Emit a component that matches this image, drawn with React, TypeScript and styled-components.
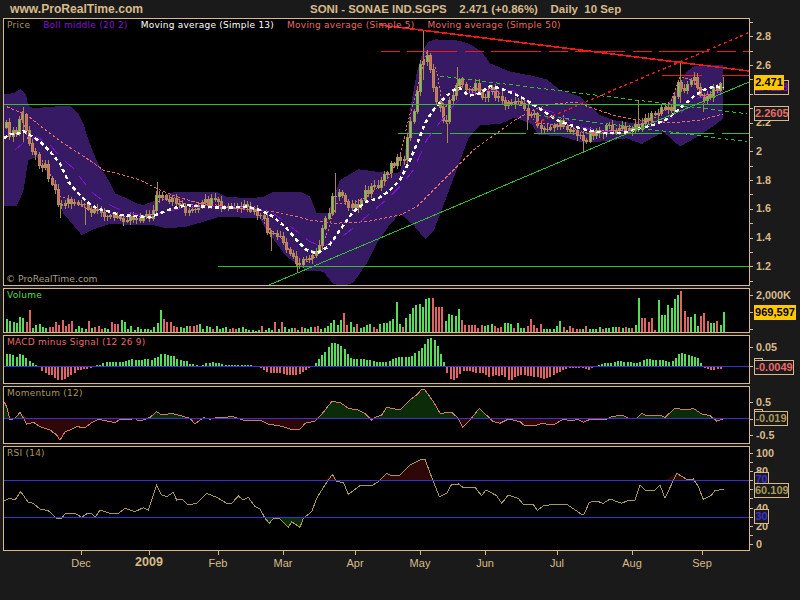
import React from "react";
import styled, { createGlobalStyle } from "styled-components";

type Point = number[];

const TAN = "#d8ba8a";
const GREEN_LINE = "#2fbf2f";
const BLUE_LINE = "#3a30d8";
const BAR_GREEN = "#55dd55";
const BAR_RED = "#e06464";
const OLIVE = "#a89858";
const SALMON = "#e86a6a";

const GlobalStyle = createGlobalStyle`
    html, body {
        margin: 0;
        padding: 0;
        background: #1a1a1a;
    }
`;

const Page = styled.div`
    width: 800px;
    height: 600px;
    overflow: hidden;
    background: #1a1a1a;
    color: ${TAN};
    font-family: "Liberation Sans", Arial, sans-serif;
    padding-left: 3px;
    box-sizing: border-box;
    display: flex;
    flex-direction: column;
`;

const Header = styled.div`
    height: 18px;
    display: flex;
    align-items: center;
    font-weight: bold;
    white-space: pre;
`;

const Site = styled.span`
    margin-left: 7px;
    width: 300px;
    font-size: 12.1px;
`;

const Title = styled.span`
    font-size: 11.45px;
`;

const ChartStack = styled.div`
    display: flex;
    flex-direction: column;
    gap: 2px;
`;

const PaneRow = styled.div<{ $h: number }>`
    display: flex;
    height: ${p => p.$h}px;
`;

const Pane = styled.div`
    position: relative;
    width: 747px;
    height: 100%;
    box-sizing: border-box;
    border: 1px solid ${TAN};
    background: #000;
`;

const ChartSvg = styled.svg`
    display: block;
`;

const Legend = styled.div`
    position: absolute;
    top: 1px;
    left: 3px;
    display: flex;
    gap: 13px;
    font-family: "DejaVu Sans", sans-serif;
    font-size: 9px;
    line-height: 11px;
    letter-spacing: 0.24px;
    white-space: nowrap;
`;

const LegendItem = styled.span<{ $color: string }>`
    color: ${p => p.$color};
`;

const Watermark = styled.div`
    position: absolute;
    left: 2px;
    bottom: 0;
    font-family: "DejaVu Sans", sans-serif;
    font-size: 9.2px;
    line-height: 12px;
    color: #a89c80;
`;

// the ticks are a repeating background, the labels sit in a grid of the same pitch
const Axis = styled.div<{ $start: number; $step: number }>`
    position: relative;
    width: 50px;
    background-image: repeating-linear-gradient(to bottom, ${TAN} 0, ${TAN} 1px, transparent 1px, transparent ${p => p.$step}px);
    background-size: 3px 100%;
    background-position: 0 ${p => p.$start}px;
    background-repeat: no-repeat;
`;

const AxisLabels = styled.div<{ $top: number; $step: number }>`
    display: grid;
    grid-auto-rows: ${p => p.$step}px;
    padding: ${p => p.$top}px 0 0 6px;
    font-size: 10.8px;
    line-height: 14px;
    font-weight: bold;
    white-space: nowrap;
`;

const ValueTag = styled.div<{ $y: number; $color: string; $w: number; $fill?: boolean }>`
    position: absolute;
    left: 4px;
    top: ${p => p.$y}px;
    width: ${p => p.$w}px;
    height: 15px;
    box-sizing: border-box;
    border: 1px solid ${p => (p.$fill ? "#ffc800" : TAN)};
    background: ${p => (p.$fill ? "#ffc800" : "#1a1a1a")};
    color: ${p => p.$color};
    font-size: 11px;
    line-height: 13px;
    font-weight: bold;
    text-align: center;
    white-space: nowrap;
`;

const TimeAxis = styled.div`
    display: flex;
    height: 48px;
    padding-left: 78px;
`;

const MonthMark = styled.div<{ $w: number }>`
    width: ${p => p.$w}px;
    display: flex;
    flex-direction: column;
`;

const MonthTick = styled.div`
    width: 1px;
    height: 4px;
    background: ${TAN};
`;

const MonthLabel = styled.div<{ $year?: boolean }>`
    width: 40px;
    margin: ${p => (p.$year ? 0 : 1)}px 0 0 -20px;
    text-align: center;
    font-size: ${p => (p.$year ? 12.5 : 11)}px;
    line-height: 14px;
    font-weight: ${p => (p.$year ? "bold" : "normal")};
`;

// traced in 3x zoom coordinates, the right half of the chart starts again at 0
const joinHalves = (left: Point[], right: Point[]): Point[] =>
    [...left, ...right.map(([x, y]) => [x + 1200, y])];

const BAND_UPPER = joinHalves(
    [[12, 282], [40, 280], [62, 267], [78, 283], [84, 315], [100, 325], [150, 320], [210, 318], [235, 340], [250, 370], [265, 420], [285, 470], [300, 500], [325, 540], [345, 580], [380, 595], [410, 610], [430, 615], [470, 600], [510, 578], [560, 575], [650, 575], [680, 590], [750, 595], [790, 590], [820, 575], [900, 575], [930, 590], [950, 640], [985, 640], [1020, 540], [1075, 508], [1130, 515], [1190, 520]],
    [[0, 515], [15, 460], [30, 330], [50, 220], [70, 150], [85, 125], [105, 118], [180, 122], [215, 135], [245, 155], [270, 190], [330, 215], [400, 228], [440, 238], [480, 270], [540, 290], [600, 345], [640, 360], [700, 370], [760, 345], [800, 320], [830, 265], [860, 215], [885, 197], [970, 195]]
);

const BAND_LOWER = joinHalves(
    [[12, 617], [50, 617], [70, 575], [85, 480], [110, 470], [130, 500], [160, 540], [175, 590], [190, 640], [245, 705], [275, 690], [330, 672], [400, 675], [460, 675], [500, 685], [560, 680], [660, 650], [780, 655], [795, 685], [860, 770], [920, 812], [970, 815], [1000, 852], [1030, 858], [1060, 848], [1100, 790], [1130, 730], [1165, 680]],
    [[0, 640], [40, 675], [75, 717], [100, 695], [125, 630], [170, 510], [205, 415], [240, 375], [300, 372], [345, 352], [395, 372], [415, 405], [480, 408], [550, 428], [600, 425], [680, 415], [725, 432], [790, 395], [840, 440], [900, 405], [945, 375], [970, 355]]
);

const MA13 = joinHalves(
    [[12, 415], [30, 402], [50, 403], [70, 393], [90, 405], [120, 425], [150, 455], [180, 490], [205, 545], [230, 575], [260, 605], [290, 625], [330, 635], [360, 645], [400, 648], [450, 652], [480, 640], [520, 625], [560, 615], [610, 620], [650, 622], [700, 622], [740, 620], [780, 630], [820, 650], [860, 685], [890, 720], [920, 750], [950, 760], [985, 740], [1020, 690], [1060, 635], [1100, 605], [1135, 595], [1165, 575]],
    [[0, 540], [30, 480], [60, 410], [75, 370], [100, 330], [130, 297], [160, 270], [180, 265], [205, 287], [240, 280], [270, 258], [300, 265], [340, 280], [370, 295], [410, 320], [440, 340], [470, 360], [510, 375], [560, 390], [620, 400], [680, 398], [720, 385], [760, 375], [800, 358], [840, 325], [880, 290], [910, 270], [945, 258], [970, 265]]
);

const MA5 = joinHalves(
    [[65, 340], [85, 420], [120, 470], [150, 520], [180, 590], [215, 600], [260, 625], [310, 630], [360, 650], [450, 650], [480, 600], [520, 590], [560, 615], [620, 610], [700, 625], [770, 630], [800, 680], [850, 720], [880, 770], [920, 785], [950, 770], [985, 690], [1010, 610], [1060, 610], [1100, 590], [1160, 540]],
    [[0, 470], [20, 380], [50, 270], [80, 160], [110, 210], [130, 330], [160, 290], [190, 250], [240, 270], [280, 265], [320, 300], [370, 320], [410, 370], [450, 372], [500, 375], [540, 395], [570, 400], [620, 390], [680, 390], [720, 375], [780, 345], [815, 300], [840, 230], [880, 240], [910, 290], [950, 270], [970, 260]]
);

const MA50 = joinHalves(
    [[20, 320], [80, 345], [130, 385], [190, 430], [260, 475], [310, 510], [370, 525], [420, 540], [480, 570], [530, 590], [580, 605], [640, 620], [700, 625], [780, 630], [850, 640], [930, 660], [1000, 670], [1100, 665]],
    [[0, 645], [50, 620], [100, 570], [160, 510], [220, 450], [290, 400], [345, 360], [410, 325], [470, 310], [530, 308], [580, 325], [640, 345], [700, 358], [770, 365], [830, 368], [900, 360], [970, 342]]
);

const MA20 = joinHalves(
    [[45, 450], [80, 420], [110, 410], [150, 435], [185, 475], [220, 505], [250, 545], [280, 580], [320, 610], [350, 625], [400, 640], [450, 650], [500, 635], [560, 622], [650, 620], [760, 622], [820, 640], [860, 670], [930, 725], [970, 740], [1040, 700], [1110, 640], [1170, 590]],
    [[0, 560], [40, 510], [80, 420], [140, 340], [190, 285], [260, 270], [340, 272], [400, 320], [470, 340], [540, 380], [620, 395], [700, 395], [780, 370], [840, 340], [890, 295], [970, 275]]
);

const PRICE_PATH = joinHalves(
    [[20, 380], [30, 400], [45, 405], [60, 350], [70, 340], [80, 410], [90, 455], [105, 460], [120, 490], [135, 500], [150, 530], [165, 570], [180, 620], [200, 600], [220, 605], [240, 610], [260, 630], [285, 640], [310, 635], [330, 650], [350, 655], [380, 650], [410, 650], [450, 650], [468, 590], [485, 590], [500, 610], [525, 600], [550, 625], [580, 635], [610, 610], [640, 605], [670, 625], [700, 625], [740, 625], [770, 640], [790, 665], [800, 690], [820, 710], [845, 720], [865, 760], [885, 775], [905, 790], [925, 770], [950, 745], [968, 690], [990, 630], [1000, 570], [1020, 590], [1045, 610], [1065, 620], [1090, 580], [1130, 565], [1165, 500], [1185, 480]],
    [[10, 470], [30, 380], [50, 280], [60, 200], [75, 155], [90, 210], [105, 280], [120, 340], [135, 370], [150, 300], [170, 240], [195, 260], [225, 260], [250, 285], [275, 260], [300, 310], [320, 310], [345, 290], [375, 330], [400, 345], [420, 395], [450, 375], [490, 372], [525, 395], [550, 425], [570, 395], [600, 390], [650, 385], [690, 392], [715, 375], [740, 355], [785, 330], [815, 320], [830, 250], [855, 260], [885, 235], [910, 300], [940, 270], [970, 245]]
);

// x in 3x zoom coordinates, then wick top and bottom
const WICK_SPIKES = [
    [70, 320, 430], [180, 610, 655], [255, 620, 675], [470, 547, 620], [812, 690, 752], [890, 785, 820], [1005, 520, 640],
    [1270, 90, 240], [1340, 370, 430], [1370, 200, 260], [1580, 330, 390], [1750, 425, 455], [1915, 300, 380], [2040, 185, 310], [2110, 310, 335], [2170, 230, 270],
];

const VOLUME = [
    13, 11, 10, 9, 15, 14, -10, -22, 4, 7, 8, 5, 4, -5, -5, -10, -7, -12, -6, -8, -11, 3, 6, 4, 3, -11, 4, -5, -6, -3, 4, 3, -10, -8, -8, 12, 10, 3, 6, 2, 5, 3, 3, 3, 2, 5, 9, 22, -13, -10, -10, -6, -5, 5, 4, 6, -6, -6, -7, 8, 3, 6, 5, -3, 6, 3, 4, 5, -3, -4, -3, 4, 5, 3, 2, 2, 1, 2, -6, 2, 4, 2, -10, 3, -10, 5, 3, 4, -4, 2, -5, 4, 3, 5, -5, -6, 3, 4, 6, 9, 12, 7, 12, -19, -7, 10, 5, -8, 4, 5, 7, 8, -5, -3, 8, 9, 9, 11, 13, 30, 8,
    -5, 14, 18, 24, 27, 28, 25, 33, 34, -34, -25, -25, -25, 11, 18, 17, 16, 23, -12, -7, -7, -7, -7, -4, -7, 6, 7, 8, -6, -4, -5, 9, 9, 8, -4, 9, 4, 4, -6, -13, -7, -4, -8, 3, 3, 3, 3, 6, 11, -5, 2, -6, -4, -3, -3, 3, -6, 3, 3, 3, 5, -3, 4, 4, 5, 5, -5, 4, -5, 4, -4, 7, 34, -14, -14, -10, -14, -2, 32, 17, 17, 27, 24, 33, 37, -41, -21, -15, 15, 18, 6, -16, -19, -11, 9, 9, -11, 7, 20,
];

const MACD = [
    12, 12, 11, 9, 12, 11, 8, 5, 3, 1, -1, -5, -7, -9, -9, -12, -14, -14, -13, -11, -9, -7, -4, -4, -3, -3, -2, -1, 1, 1, 3, 4, 4, 4, 4, 4, 4, 5, 6, 7, 6, 6, 6, 7, 7, 6, 8, 9, 12, 12, 11, 10, 10, 7, 6, 5, 5, 2, 2, 1, -1, 1, 3, 3, 4, 3, 3, 2, 1, 1, 1, 1, 1, 1, 1, 1, 1, -1, -1, -2, -4, -6, -7, -7, -7, -7, -8, -9, -9, -9, -9, -8, -6, -4, -2, -1, 3, 7, 11, 14, 19, 23, 23, 22, 20, 17, 12, 8, 7, 7, 7, 7, 6, 6, 5, 4, 4, 4, 4, 5, 7, 8, 9, 9, 9,
    9, 10, 13, 15, 18, 22, 27, 28, 26, 20, 12, 4, -7, -13, -14, -12, -8, -5, -5, -5, -6, -7, -7, -7, -9, -11, -10, -9, -10, -9, -11, -14, -14, -11, -10, -9, -9, -10, -10, -11, -11, -12, -13, -12, -11, -9, -7, -6, -4, -3, -2, -2, -2, -2, -2, -3, -4, -2, -1, 1, 2, 3, 3, 3, 4, 5, 5, 4, 4, 4, 3, 3, 4, 6, 7, 7, 6, 6, 6, 6, 5, 4, 5, 8, 12, 13, 12, 11, 10, 9, 8, 3, -2, -3, -4, -4, -3, -3, -1,
];

const MOMENTUM = joinHalves(
    [[12, 350], [20, 365], [30, 405], [45, 400], [60, 382], [80, 417], [100, 412], [120, 425], [150, 435], [170, 450], [180, 466], [195, 440], [215, 433], [230, 425], [255, 428], [275, 413], [295, 403], [320, 408], [345, 413], [360, 403], [385, 405], [405, 400], [412, 405], [430, 405], [450, 397], [470, 380], [485, 390], [515, 385], [545, 393], [570, 400], [585, 417], [610, 398], [630, 403], [650, 398], [700, 395], [730, 405], [780, 405], [805, 417], [850, 425], [870, 432], [900, 433], [915, 415], [945, 408], [965, 388], [995, 350], [1020, 352], [1045, 370], [1075, 375], [1095, 385], [1115, 405], [1130, 395], [1145, 390], [1160, 367]],
    [[0, 375], [30, 345], [50, 330], [65, 313], [75, 315], [100, 350], [120, 385], [155, 382], [175, 400], [188, 427], [210, 405], [238, 370], [250, 382], [270, 400], [280, 410], [300, 415], [325, 402], [360, 410], [375, 423], [410, 420], [425, 415], [460, 420], [490, 403], [520, 408], [530, 402], [550, 412], [570, 403], [615, 405], [635, 395], [665, 390], [685, 400], [710, 400], [725, 385], [740, 392], [780, 390], [795, 397], [825, 370], [860, 375], [880, 370], [905, 387], [930, 392], [950, 408], [970, 402]]
);

const RSI = joinHalves(
    [[12, 647], [30, 640], [45, 645], [62, 620], [85, 652], [100, 655], [120, 672], [145, 677], [170, 700], [185, 700], [195, 687], [225, 685], [245, 697], [262, 685], [275, 685], [285, 697], [300, 675], [330, 685], [355, 685], [375, 670], [405, 680], [430, 668], [445, 675], [470, 600], [485, 630], [500, 635], [520, 622], [530, 645], [545, 642], [565, 660], [590, 655], [620, 625], [650, 637], [680, 655], [695, 655], [715, 633], [730, 645], [745, 637], [765, 665], [780, 672], [795, 700], [808, 715], [820, 700], [840, 702], [865, 727], [875, 710], [900, 727], [910, 700], [935, 680], [950, 640], [975, 600], [997, 568], [1010, 590], [1030, 592], [1045, 628], [1080, 602], [1115, 602], [1135, 590], [1160, 565], [1175, 572]],
    [[0, 570], [30, 540], [65, 523], [75, 523], [100, 590], [118, 635], [140, 625], [155, 598], [175, 597], [190, 608], [225, 607], [245, 632], [258, 615], [290, 632], [305, 655], [325, 630], [355, 640], [370, 658], [400, 658], [412, 677], [430, 662], [470, 657], [500, 658], [530, 678], [545, 688], [552, 688], [568, 652], [590, 648], [610, 655], [630, 642], [665, 655], [680, 648], [705, 645], [720, 600], [735, 615], [765, 615], [780, 600], [795, 640], [830, 565], [860, 583], [880, 582], [895, 605], [910, 643], [935, 630], [945, 617], [972, 612]]
);

const MONTHS = [
    { name: "Dec", width: 68 },
    { name: "2009", width: 69, year: true },
    { name: "Feb", width: 65 },
    { name: "Mar", width: 72 },
    { name: "Apr", width: 65 },
    { name: "May", width: 65 },
    { name: "Jun", width: 72 },
    { name: "Jul", width: 75 },
    { name: "Aug", width: 70 },
    { name: "Sep", width: 40 },
];

// points are in the 3x zoom of the picture, yOffset is where that zoom began
const toSvg = (list: Point[], yOffset = 0) =>
    list.map(([x, y]) => `${x / 3},${y / 3 + yOffset}`).join(" ");

const interpolate = (list: Point[], x: number) => {
    if (x <= list[0][0]) return list[0][1];
    for (let i = 1; i < list.length; i++) {
        if (x <= list[i][0]) {
            const [x0, y0] = list[i - 1];
            const [x1, y1] = list[i];
            return y0 + ((y1 - y0) * (x - x0)) / (x1 - x0);
        }
    }
    return list[list.length - 1][1];
};

const noise = (i: number) => {
    const v = Math.sin(i * 12.9898) * 43758.5453;
    return v - Math.floor(v);
};

const Candles: React.FC = () => {
    let previous = interpolate(PRICE_PATH, 18) / 3;
    return (
        <>
            {Array.from({ length: 220 }, (_, i) => {
                const x = 6 + i * 3.26;
                const swing = noise(i) * 26 - 13;
                const close = (interpolate(PRICE_PATH, x * 3) + swing) / 3;
                const open = previous;
                previous = close;
                const top = Math.round(Math.min(open, close));
                const bottom = Math.round(Math.max(open, close)) + 1;
                const height = bottom - top;
                const left = Math.round(x) - 1;
                const centre = close < open ? BAR_GREEN : BAR_RED;
                const wickTop = top - 1 - Math.round(noise(i + 400) * 4);
                const wickBottom = bottom + 1 + Math.round(noise(i + 800) * 4);
                return (
                    <g key={i}>
                        <rect x={left + 1} y={wickTop} width={1} height={wickBottom - wickTop} fill="#a88850" />
                        <rect x={left} y={top} width={3} height={height} fill="#b08f5c" />
                        {height > 4 && <rect x={left + 1} y={top + 1} width={1} height={height - 2} fill={centre} />}
                    </g>
                );
            })}
            {WICK_SPIKES.map(([x, top, bottom]) => (
                <rect key={x} x={Math.round(x / 3)} y={top / 3} width={1} height={(bottom - top) / 3} fill="#a88850" />
            ))}
        </>
    );
};

// sign is the colour; columns stand on the baseline, histograms go either way
const Bars: React.FC<{ values: number[]; baseline: number; columns?: boolean }> = ({ values, baseline, columns }) => (
    <>
        {values.map((value, i) => {
            const x = Math.round(6 + (i * 717) / (values.length - 1));
            const height = Math.abs(value);
            return (
                <rect
                    key={i}
                    x={x}
                    y={value > 0 || columns ? baseline - height : baseline}
                    width={2}
                    height={height}
                    fill={value > 0 ? BAR_GREEN : BAR_RED}
                />
            );
        })}
    </>
);

const clampFill = (list: Point[], limit: number, above: boolean, yOffset: number) => {
    const clamped = list.map(([x, y]) => [x, above ? Math.min(y, limit) : Math.max(y, limit)]);
    const first = clamped[0][0];
    const last = clamped[clamped.length - 1][0];
    return toSvg([[first, limit], ...clamped, [last, limit]], yOffset);
};

const PricePanel: React.FC = () => (
    <PaneRow $h={268}>
        <Pane>
            <ChartSvg width={745} height={266} viewBox="4 19 745 266" shapeRendering="crispEdges">
                <polygon points={toSvg([...BAND_UPPER, ...[...BAND_LOWER].reverse()])} fill="#361a63" />
                <line x1={398} y1={133.5} x2={749} y2={133.5} stroke={GREEN_LINE} strokeDasharray="44 8 76 8" />
                <line x1={381} y1={51.5} x2={749} y2={51.5} stroke="#f01818" strokeDasharray="19 7 50 8" />
                <line x1={662} y1={75.5} x2={749} y2={75.5} stroke="#f01818" strokeDasharray="40 20" />
                <Candles />
                <polyline points={toSvg(MA50)} fill="none" stroke={SALMON} strokeDasharray="3 2" />
                <polyline points={toSvg(MA20)} fill="none" stroke="#8410d8" strokeDasharray="12 9" />
                <polyline points={toSvg(MA5)} fill="none" stroke={SALMON} strokeDasharray="2 2" />
                <polyline points={toSvg(MA13)} fill="none" stroke="#fff" strokeWidth={2.5} strokeDasharray="4 3" />
                <line x1={4} y1={104.5} x2={749} y2={104.5} stroke={GREEN_LINE} />
                <line x1={218} y1={266.5} x2={749} y2={266.5} stroke={GREEN_LINE} />
                <line x1={269} y1={285} x2={749} y2={82} stroke={GREEN_LINE} />
                <line x1={380} y1={25} x2={749} y2={71} stroke="#f01818" strokeWidth={1.6} />
                <line x1={536} y1={123} x2={748} y2={33} stroke="#f01818" strokeWidth={1.4} strokeDasharray="3 3" />
                <line x1={440} y1={76} x2={747} y2={113.7} stroke={GREEN_LINE} strokeDasharray="4 3" />
                <line x1={537} y1={115} x2={747} y2={141.7} stroke={GREEN_LINE} strokeDasharray="4 3" />
            </ChartSvg>
            <Legend>
                <LegendItem $color={OLIVE}>Price</LegendItem>
                <LegendItem $color="#8410d8">Boll middle (20 2)</LegendItem>
                <LegendItem $color="#fff">Moving average (Simple 13)</LegendItem>
                <LegendItem $color={SALMON}>Moving average (Simple 5)</LegendItem>
                <LegendItem $color={SALMON}>Moving average (Simple 50)</LegendItem>
            </Legend>
            <Watermark>© ProRealTime.com</Watermark>
        </Pane>
        <Axis $start={3.6} $step={14.37}>
            <AxisLabels $top={11} $step={28.74}>
                <span>2.8</span>
                <span>2.6</span>
                <span />
                <span>2.2</span>
                <span>2</span>
                <span>1.8</span>
                <span>1.6</span>
                <span>1.4</span>
                <span>1.2</span>
            </AxisLabels>
            <ValueTag $y={62} $w={35} $color="#8410d8">2.4118</ValueTag>
            <ValueTag $y={57} $w={30} $color="#000" $fill>2.471</ValueTag>
            <ValueTag $y={88} $w={35} $color={SALMON}>2.2605</ValueTag>
        </Axis>
    </PaneRow>
);

const VolumePanel: React.FC = () => (
    <PaneRow $h={45}>
        <Pane>
            <ChartSvg width={745} height={43} viewBox="4 289 745 43" shapeRendering="crispEdges">
                <Bars values={VOLUME} baseline={332} columns />
            </ChartSvg>
            <Legend>
                <LegendItem $color={BAR_GREEN}>Volume</LegendItem>
            </Legend>
        </Pane>
        <Axis $start={7} $step={17}>
            <AxisLabels $top={0} $step={14}>
                <span>2,000K</span>
            </AxisLabels>
            <ValueTag $y={17} $w={42} $color="#000" $fill>969,597</ValueTag>
        </Axis>
    </PaneRow>
);

const MacdPanel: React.FC = () => (
    <PaneRow $h={49}>
        <Pane>
            <ChartSvg width={745} height={47} viewBox="4 336 745 47" shapeRendering="crispEdges">
                <Bars values={MACD} baseline={366} />
                <line x1={4} y1={366.5} x2={749} y2={366.5} stroke={BLUE_LINE} />
            </ChartSvg>
            <Legend>
                <LegendItem $color={SALMON}>MACD minus Signal (12 26 9)</LegendItem>
            </Legend>
        </Pane>
        <Axis $start={12} $step={19}>
            <AxisLabels $top={5} $step={19}>
                <span>0.05</span>
            </AxisLabels>
            <ValueTag $y={23} $w={9} $color={TAN} />
            <ValueTag $y={25} $w={40} $color={SALMON}>-0.0049</ValueTag>
        </Axis>
    </PaneRow>
);

const MomentumPanel: React.FC = () => (
    <PaneRow $h={58}>
        <Pane>
            <ChartSvg width={745} height={56} viewBox="4 387 745 56" shapeRendering="crispEdges">
                <polygon points={clampFill(MOMENTUM, 400, true, 285)} fill="#0a2c08" />
                <polygon points={clampFill(MOMENTUM, 400, false, 285)} fill="#2e0808" />
                <polyline points={toSvg(MOMENTUM, 285)} fill="none" stroke={OLIVE} />
                <polyline points={toSvg(MOMENTUM, 285)} fill="none" stroke={SALMON} strokeDasharray="5 4" />
                <line x1={4} y1={418.5} x2={749} y2={418.5} stroke={BLUE_LINE} />
            </ChartSvg>
            <Legend>
                <LegendItem $color={OLIVE}>Momentum (12)</LegendItem>
            </Legend>
        </Pane>
        <Axis $start={16} $step={16.6}>
            <AxisLabels $top={9} $step={16.6}>
                <span>0.5</span>
                <span />
                <span>-0.5</span>
            </AxisLabels>
            <ValueTag $y={23} $w={9} $color={TAN} />
            <ValueTag $y={25} $w={34} $color={OLIVE}>-0.019</ValueTag>
        </Axis>
    </PaneRow>
);

const RsiPanel: React.FC = () => (
    <PaneRow $h={105}>
        <Pane>
            <ChartSvg width={745} height={103} viewBox="4 447 745 103" shapeRendering="crispEdges">
                <polygon points={clampFill(RSI, 586, true, 285)} fill="#2e0808" />
                <polygon points={clampFill(RSI, 697, false, 285)} fill="#0a2c08" />
                <polyline points={toSvg(RSI, 285)} fill="none" stroke={OLIVE} />
                <line x1={4} y1={480.5} x2={749} y2={480.5} stroke={BLUE_LINE} />
                <line x1={4} y1={517.5} x2={749} y2={517.5} stroke={BLUE_LINE} />
            </ChartSvg>
            <Legend>
                <LegendItem $color={OLIVE}>RSI (14)</LegendItem>
            </Legend>
        </Pane>
        <Axis $start={7} $step={9.09}>
            <AxisLabels $top={0} $step={18.18}>
                <span>100</span>
                <span>80</span>
                <span />
                <span>40</span>
                <span>20</span>
                <span>0</span>
            </AxisLabels>
            <ValueTag $y={26} $w={15} $color={BLUE_LINE}>70</ValueTag>
            <ValueTag $y={63} $w={15} $color={BLUE_LINE}>30</ValueTag>
            <ValueTag $y={37} $w={35} $color={OLIVE}>60.109</ValueTag>
        </Axis>
    </PaneRow>
);

const App: React.FC = () => (
    <>
        <GlobalStyle />
        <Page>
            <Header>
                <Site>www.ProRealTime.com</Site>
                <Title>{"SONI - SONAE IND.SGPS    2.471 (+0.86%)    Daily  10 Sep"}</Title>
            </Header>
            <ChartStack>
                <PricePanel />
                <VolumePanel />
                <MacdPanel />
                <MomentumPanel />
                <RsiPanel />
            </ChartStack>
            <TimeAxis>
                {MONTHS.map(month => (
                    <MonthMark key={month.name} $w={month.width}>
                        <MonthTick />
                        <MonthLabel $year={month.year}>{month.name}</MonthLabel>
                    </MonthMark>
                ))}
            </TimeAxis>
        </Page>
    </>
);

export default App;
